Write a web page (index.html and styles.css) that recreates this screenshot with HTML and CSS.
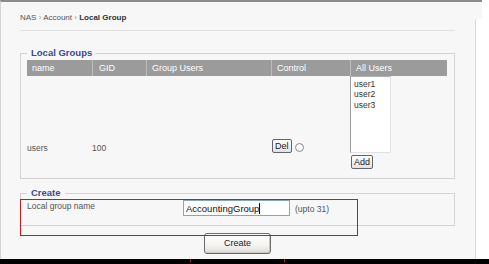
FILE: index.html
```html
<!DOCTYPE html>
<html lang="en">
<head>
<meta charset="utf-8">
<title>NAS - Local Group</title>
<link rel="stylesheet" href="styles.css">
</head>
<body>
<div class="screen">
  <div class="top">
    <div class="main">
      <div class="crumbs">NAS <span class="sep">›</span> Account <span class="sep">›</span> <b>Local Group</b></div>
      <div class="rule"></div>

      <fieldset class="box groups">
        <legend>Local Groups</legend>
        <div class="grid">
          <div class="th">name</div>
          <div class="th gid">GID</div>
          <div class="th">Group Users</div>
          <div class="th">Control</div>
          <div class="th">All Users</div>

          <div class="td txt">users</div>
          <div class="td txt">100</div>
          <div class="td"></div>
          <div class="td ctrl">
            <span class="btn">Del</span>
            <span class="radio"></span>
          </div>
          <div class="td all">
            <div class="listbox">
              <div>user1</div>
              <div>user2</div>
              <div>user3</div>
            </div>
            <span class="btn add">Add</span>
          </div>
        </div>
      </fieldset>

      <fieldset class="box create">
        <legend>Create</legend>
        <div class="row">
          <span class="label">Local group name</span>
          <span class="field">AccountingGroup<span class="caret"></span></span>
          <span class="hint">(upto 31)</span>
        </div>
      </fieldset>

      <div class="actions"><span class="cbtn">Create</span></div>
    </div>
    <div class="side"></div>
  </div>
  <div class="bottom">
    <span class="mark m1"></span>
    <span class="mark m2"></span>
  </div>
  <div class="annot"></div>
</div>
</body>
</html>
```

FILE: styles.css
```css
html, body {
  margin: 0;
  padding: 0;
  background: #000;
}

.screen {
  position: relative;
  width: 489px;
  height: 264px;
  display: flex;
  flex-direction: column;
  font-family: "Liberation Sans", Arial, sans-serif;
  color: #444;
  overflow: hidden;
}

.top {
  height: 259px;
  display: flex;
}

.main {
  width: 475px;
  box-sizing: border-box;
  background: #f7f7f7;
  border-top: 2px solid #8c8c8c;
  border-left: 1px solid #d4d4d4;
  padding-left: 19px;
}

.side {
  flex: 1;
  background:
    linear-gradient(#8c8c8c, #8c8c8c) 0 0 / 7px 2px no-repeat,
    linear-gradient(#f7f7f7, #f7f7f7) 0 0 / 7px 19px no-repeat,
    linear-gradient(#dadada, #dadada) 0 19px / 1px 100% no-repeat,
    #ffffff;
}

.crumbs {
  padding-top: 11px;
  font-size: 8px;
  line-height: 10px;
  color: #555;
}
.crumbs .sep { color: #999; }
.crumbs b { color: #333; }

.rule {
  margin-top: 7px;
  width: 435px;
  height: 1px;
  background: #e2e2e2;
}

.box {
  width: 435px;
  box-sizing: border-box;
  margin: 0;
  min-width: 0;
  border: 1px solid #d3d3d3;
  padding: 1px 7px 6px 6px;
}
.box legend {
  padding: 0 4px;
  margin: 0;
  font-size: 9.5px;
  line-height: 12px;
  font-weight: bold;
  color: #3c4a96;
}

.groups { margin-top: 16px; }

.grid {
  display: grid;
  grid-template-columns: 65px 54px 125px 79px 97px;
}

.th {
  height: 16px;
  box-sizing: border-box;
  line-height: 16px;
  background: #9b9b9b;
  color: #fff;
  font-size: 9px;
  padding-left: 5px;
  border-left: 1px solid #bcbcbc;
}
.th:first-child { border-left: 0; }
.th.gid { padding-left: 6px; }

.td {
  height: 96px;
  box-sizing: border-box;
  font-size: 8.5px;
  color: #555;
}
.td.txt {
  padding-top: 66px;
  line-height: 12px;
}
.td.ctrl {
  padding-top: 63px;
  padding-left: 1px;
  display: flex;
  align-items: flex-start;
  gap: 3px;
}
.td.all {
  display: flex;
  flex-direction: column;
  align-items: flex-start;
}

.btn {
  display: inline-block;
  box-sizing: border-box;
  height: 14px;
  line-height: 12px;
  padding: 0 2px;
  font-size: 9px;
  color: #222;
  border: 1px solid #5f656b;
  border-radius: 2px;
  background: linear-gradient(#fdfdfd, #e3e3e3);
}
.btn.add {
  margin-top: 2px;
  margin-left: 1px;
  width: 22px;
  text-align: center;
}

.radio {
  margin-top: 4px;
  width: 9px;
  height: 9px;
  box-sizing: border-box;
  border: 1px solid #8a8a8a;
  border-radius: 50%;
  background: #fafafa;
}

.listbox {
  width: 41px;
  height: 77px;
  box-sizing: border-box;
  background: #fff;
  border: 1px solid #e2e2e2;
  border-left-color: #9c9c9c;
  border-top-color: #b0b0b0;
  padding: 2px 0 0 3px;
  font-size: 8.5px;
  line-height: 10.4px;
  color: #333;
}

.create {
  margin-top: 8px;
  padding-bottom: 9px;
}
.row {
  display: flex;
  align-items: flex-start;
  height: 16px;
  font-size: 8.5px;
}
.label {
  width: 156px;
  line-height: 13px;
  color: #555;
}
.field {
  display: inline-flex;
  align-items: center;
  width: 107px;
  height: 16px;
  box-sizing: border-box;
  border: 1px solid #8aa4bf;
  background: #fff;
  padding-left: 2px;
  font-size: 9.5px;
  color: #111;
}
.caret {
  display: inline-block;
  width: 1px;
  height: 11px;
  margin-left: 0;
  background: #111;
}
.hint {
  margin-left: 5px;
  line-height: 18px;
  color: #555;
}

.actions {
  width: 435px;
  display: flex;
  justify-content: center;
  margin-top: 7px;
}
.cbtn {
  width: 67px;
  height: 21px;
  box-sizing: border-box;
  border: 1px solid #6a6a6a;
  border-radius: 3px;
  background: linear-gradient(#ffffff, #f3f3f0 60%, #dedcd6);
  box-shadow: inset -1px -1px 0 #c9c7c0;
  text-align: center;
  line-height: 19px;
  font-size: 9px;
  color: #222;
}

.bottom {
  position: relative;
  flex: 1;
  background: #000;
}
.mark {
  position: absolute;
  top: 0;
  width: 1px;
  height: 3px;
  background: #e0141a;
}
.m1 { left: 190px; }
.m2 { left: 284px; }

.annot {
  position: absolute;
  left: 20px;
  top: 199px;
  width: 338px;
  height: 37px;
  box-sizing: border-box;
  border: 1px solid #d41219;
}
```
